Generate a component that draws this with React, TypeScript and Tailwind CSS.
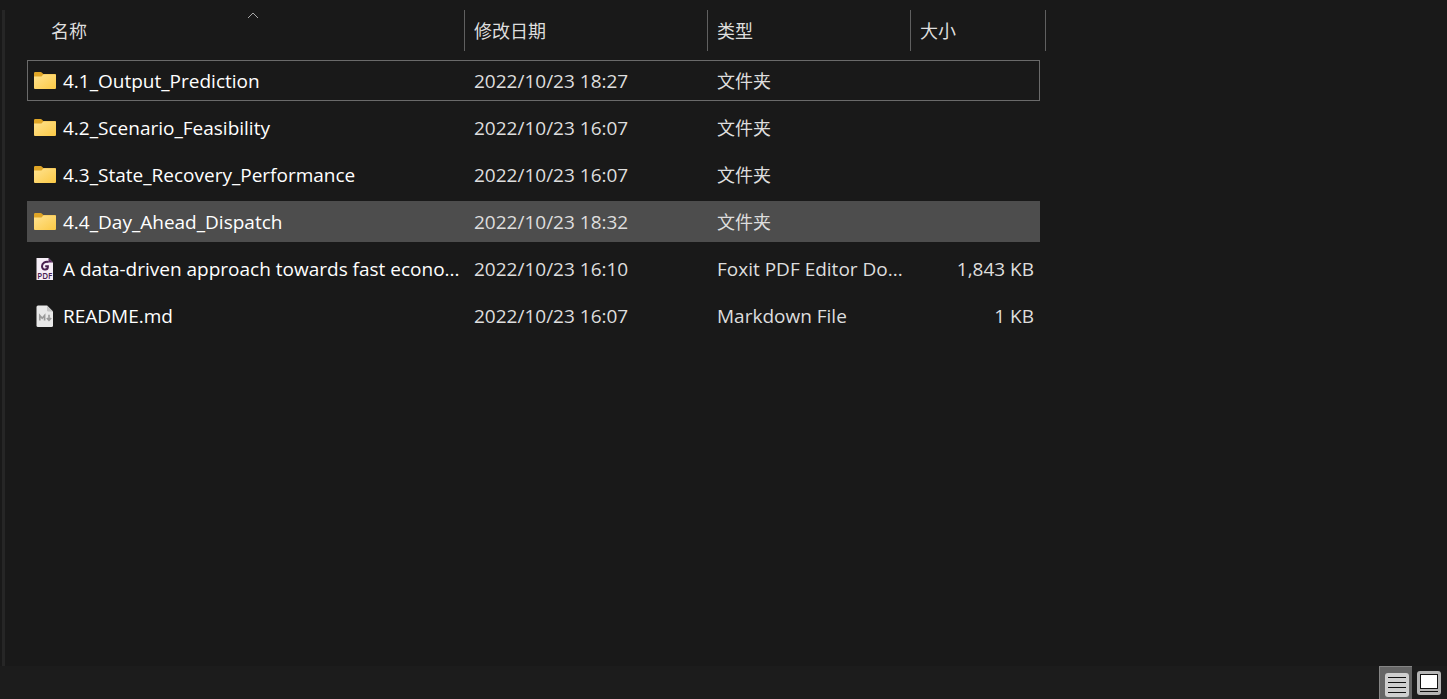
import { useState } from 'react';

type FileKind = 'folder' | 'pdf' | 'markdown';

interface FileEntry {
  name: string;
  modified: string;
  type: string;
  size?: string;
  kind: FileKind;
}

const files: FileEntry[] = [
  { name: '4.1_Output_Prediction', modified: '2022/10/23 18:27', type: '文件夹', kind: 'folder' },
  { name: '4.2_Scenario_Feasibility', modified: '2022/10/23 16:07', type: '文件夹', kind: 'folder' },
  { name: '4.3_State_Recovery_Performance', modified: '2022/10/23 16:07', type: '文件夹', kind: 'folder' },
  { name: '4.4_Day_Ahead_Dispatch', modified: '2022/10/23 18:32', type: '文件夹', kind: 'folder' },
  {
    name: 'A data-driven approach towards fast econo...',
    modified: '2022/10/23 16:10',
    type: 'Foxit PDF Editor Do...',
    size: '1,843 KB',
    kind: 'pdf',
  },
  { name: 'README.md', modified: '2022/10/23 16:07', type: 'Markdown File', size: '1 KB', kind: 'markdown' },
];

function FolderIcon() {
  return (
    <svg viewBox="0 0 24 24" className="h-6 w-6 shrink-0" aria-hidden="true">
      <defs>
        <linearGradient id="folder-front" x1="0" y1="0" x2="1" y2="1">
          <stop offset="0" stopColor="#ffe391" />
          <stop offset="1" stopColor="#fbc945" />
        </linearGradient>
      </defs>
      <path d="M1 4.2Q1 3 2.2 3H7.6Q8.3 3 8.8 3.6L10.3 5H22Q23 5 23 6V12H1Z" fill="#dfa526" />
      <path d="M1 7.5H7.8Q8.5 7.5 9 7L10.2 5.6Q10.6 5.2 11.2 5.2H22Q23 5.2 23 6.2V19Q23 20 22 20H2Q1 20 1 19Z" fill="url(#folder-front)" />
    </svg>
  );
}

function PdfIcon() {
  return (
    <svg viewBox="0 0 24 24" className="h-6 w-6 shrink-0" aria-hidden="true">
      <path d="M3.5 1H15.5L20 5.5V23H3.5Z" fill="#f6eef7" />
      <path d="M15.5 1L20 5.5H15.5Z" fill="#5a2a60" />
      <path
        d="M15.6 5C12.2 4.2 9 6.2 9 9.2C9 11.4 10.4 12.8 12.2 12.6C14 12.4 15 11 14.9 9.2H12.2"
        fill="none"
        stroke="#48204f"
        strokeWidth="2"
      />
      <text x="11.8" y="21.8" textAnchor="middle" fontSize="8" fontWeight="600" fontFamily="Open Sans, sans-serif" fill="#48204f">
        PDF
      </text>
    </svg>
  );
}

function MarkdownIcon() {
  return (
    <svg viewBox="0 0 24 24" className="h-6 w-6 shrink-0" aria-hidden="true">
      <path d="M5 1.5H14L20 7.5V21.5Q20 23 18.5 23H5Q3.5 23 3.5 21.5V3Q3.5 1.5 5 1.5Z" fill="#e9e9e9" />
      <path d="M14 1.5L20 7.5H15.2Q14 7.5 14 6.3Z" fill="#c4c4c4" />
      <path d="M6.8 16.5V11.5L9.2 14.2L11.6 11.5V16.5" fill="none" stroke="#9a9a9a" strokeWidth="1.7" />
      <path d="M16 10.8V16M13.8 14L16 16.4L18.2 14" fill="none" stroke="#9a9a9a" strokeWidth="1.6" />
    </svg>
  );
}

function FileIcon({ kind }: { kind: FileKind }) {
  if (kind === 'folder') return <FolderIcon />;
  if (kind === 'pdf') return <PdfIcon />;
  return <MarkdownIcon />;
}

function DetailsViewIcon() {
  return (
    <svg viewBox="0 0 24 24" className="h-6 w-6" aria-hidden="true">
      <rect width="24" height="24" rx="3" fill="#cfcfcf" />
      <path d="M3 4.5H21M3 9.5H21M3 14.5H21M3 19.5H21" stroke="#111" />
    </svg>
  );
}

function LargeIconsViewIcon() {
  return (
    <svg viewBox="0 0 24 24" className="h-6 w-6" aria-hidden="true">
      <rect width="24" height="24" rx="3" fill="#b5b5b5" />
      <rect x="3.5" y="3.5" width="17" height="14" fill="#fff" stroke="#111" />
      <path d="M3 20.5H21" stroke="#111" />
    </svg>
  );
}

const headerCell = 'relative h-[41px] border-r border-[#606060] p-0 font-normal';
const headerButton = 'flex h-full w-full items-center text-left text-lg text-[#dedede]';

export default function App() {
  const [selected, setSelected] = useState(3);
  const [view, setView] = useState<'details' | 'icons'>('details');

  return (
    <div className="flex min-h-screen flex-col bg-[#191919] font-['Open_Sans','Noto_Sans_CJK_SC',sans-serif] text-[#dedede]">
      <main className="flex flex-1 pt-[10px]">
        <div className="ml-[2px] w-[3px] shrink-0 bg-[#262626]" />
        <div className="min-w-0 flex-1 pl-[22px] pr-2">
          <table className="w-full max-w-[1013px] table-fixed border-separate border-spacing-0">
            <colgroup>
              <col className="w-[438px]" />
              <col className="w-[243px]" />
              <col className="w-[203px]" />
              <col />
            </colgroup>
            <thead>
              <tr>
                <th scope="col" aria-sort="ascending" className={headerCell}>
                  <button type="button" className={`${headerButton} pl-6`}>名称</button>
                  <svg viewBox="0 0 12 7" className="absolute left-[220px] top-[2px] h-[7px] w-3" aria-hidden="true">
                    <path d="M1 6L6 1L11 6" fill="none" stroke="#a8a8a8" />
                  </svg>
                </th>
                <th scope="col" className={headerCell}>
                  <button type="button" className={`${headerButton} pl-[9px]`}>修改日期</button>
                </th>
                <th scope="col" className={headerCell}>
                  <button type="button" className={`${headerButton} pl-[9px]`}>类型</button>
                </th>
                <th scope="col" className="h-[41px] p-0 font-normal">
                  <div className="-mr-[6px] h-full border-r border-[#606060]">
                    <button type="button" className={`${headerButton} h-[41px] pl-[9px]`}>大小</button>
                  </div>
                </th>
              </tr>
            </thead>
          </table>

          <table aria-label="文件" className="mt-[3px] w-full max-w-[1013px] table-fixed border-separate border-spacing-x-0 border-spacing-y-[6px]">
            <colgroup>
              <col className="w-[438px]" />
              <col className="w-[243px]" />
              <col className="w-[203px]" />
              <col />
            </colgroup>
            <tbody>
              {files.map((file, index) => (
                <tr
                  key={file.name}
                  onClick={() => setSelected(index)}
                  className={`h-[41px] cursor-default whitespace-nowrap text-[19px] leading-6 ${
                    index === 0 ? 'outline outline-1 -outline-offset-1 outline-[#6a6a6a]' : ''
                  } ${selected === index ? 'bg-[#4d4d4d]' : 'hover:bg-[#2d2d2d]'}`}
                >
                  <td className="p-0 pl-[6px] text-white">
                    <div className="flex items-center gap-[6px]">
                      <FileIcon kind={file.kind} />
                      <span>{file.name}</span>
                    </div>
                  </td>
                  <td className="p-0 pl-[9px]">{file.modified}</td>
                  <td className={`p-0 pl-[9px] ${file.kind === 'folder' ? 'text-lg leading-6' : ''}`}>{file.type}</td>
                  <td className="p-0 pr-[6px] text-right">{file.size}</td>
                </tr>
              ))}
            </tbody>
          </table>
        </div>
      </main>

      <footer className="flex h-[33px] justify-end bg-[#1c1c1c] pr-[6px]">
        <button
          type="button"
          aria-label="详细信息"
          aria-pressed={view === 'details'}
          onClick={() => setView('details')}
          className={`flex w-[33px] items-end justify-end border-l border-t pb-[2px] pr-[3px] ${
            view === 'details' ? 'border-[#858585] bg-[#666666]' : 'border-transparent'
          }`}
        >
          <DetailsViewIcon />
        </button>
        <button
          type="button"
          aria-label="大图标"
          aria-pressed={view === 'icons'}
          onClick={() => setView('icons')}
          className="flex items-start pl-[5px] pt-[5px]"
        >
          <LargeIconsViewIcon />
        </button>
      </footer>
    </div>
  );
}
